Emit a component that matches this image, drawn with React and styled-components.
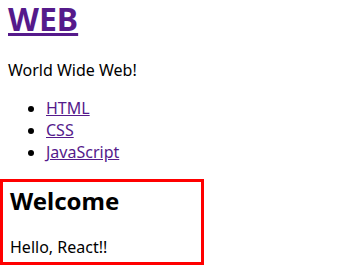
import React from 'react';
import styled, { createGlobalStyle } from 'styled-components';

const GlobalStyle = createGlobalStyle`
  html, body {
    margin: 0;
    padding: 0;
    background: #fff;
  }
  body {
    font-family: "Noto Sans", "Noto Sans CJK KR", sans-serif;
    color: #000;
  }
`;

const Page = styled.div`
  padding-top: 1px;
`;

const Header = styled.header`
  padding: 0 8px;
`;

const Title = styled.h1`
  margin: 0;
  font-size: 32px;
  line-height: 35px;
  font-weight: 700;
`;

const Link = styled.a`
  color: #551a8b;
  text-decoration: underline;
`;

const Tagline = styled.p`
  margin: 24px 0 0;
  font-size: 16px;
  line-height: 21px;
`;

const Nav = styled.ul`
  margin: 16px 0 0;
  padding-left: 38px;
  font-size: 16px;
  line-height: 22px;
`;

const Item = styled.li`
  list-style: disc;
`;

const Article = styled.article`
  margin-top: 16px;
  width: 204px;
  border: 3px solid red;
  padding: 0 0 0 7px;
  box-sizing: border-box;
`;

const Heading = styled.h2`
  margin: 4px 0 0;
  font-size: 24px;
  line-height: 30px;
  font-weight: 700;
`;

const Body = styled.p`
  margin: 21px 0 4px;
  font-size: 16px;
  line-height: 21px;
`;

const items = ['HTML', 'CSS', 'JavaScript'];

export default function App() {
  return (
    <Page>
      <GlobalStyle />
      <Header>
        <Title>
          <Link href="/">WEB</Link>
        </Title>
        <Tagline>World Wide Web!</Tagline>
        <Nav>
          {items.map((name) => (
            <Item key={name}>
              <Link href={`/${name.toLowerCase()}`}>{name}</Link>
            </Item>
          ))}
        </Nav>
      </Header>
      <Article>
        <Heading>Welcome</Heading>
        <Body>Hello, React!!</Body>
      </Article>
    </Page>
  );
}
